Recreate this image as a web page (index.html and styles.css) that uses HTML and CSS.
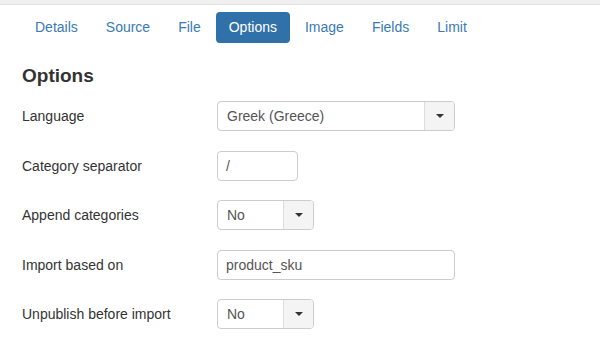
FILE: index.html
```html
<!DOCTYPE html>
<html>
<head>
<meta charset="utf-8">
<link rel="stylesheet" href="styles.css">
</head>
<body>
<div class="topbar"></div>
<nav class="tabs">
  <a class="tab">Details</a>
  <a class="tab">Source</a>
  <a class="tab">File</a>
  <a class="tab active">Options</a>
  <a class="tab">Image</a>
  <a class="tab">Fields</a>
  <a class="tab">Limit</a>
</nav>
<main class="content">
  <h2 class="title">Options</h2>
  <div class="row">
    <label class="label">Language</label>
    <div class="select wide"><span class="value">Greek (Greece)</span><span class="caret-box"><span class="caret"></span></span></div>
  </div>
  <div class="row">
    <label class="label">Category separator</label>
    <div class="input short"><span class="value">/</span></div>
  </div>
  <div class="row">
    <label class="label">Append categories</label>
    <div class="select narrow"><span class="value">No</span><span class="caret-box"><span class="caret"></span></span></div>
  </div>
  <div class="row">
    <label class="label">Import based on</label>
    <div class="input wide"><span class="value">product_sku</span></div>
  </div>
  <div class="row">
    <label class="label">Unpublish before import</label>
    <div class="select narrow"><span class="value">No</span><span class="caret-box"><span class="caret"></span></span></div>
  </div>
</main>
</body>
</html>
```

FILE: styles.css
```css
* { box-sizing: border-box; }
html, body { margin: 0; padding: 0; background: #fff; }
body {
  font-family: "Liberation Sans", Arial, sans-serif;
  font-size: 14px;
  color: #333;
  width: 600px;
  height: 337px;
  overflow: hidden;
}
.topbar {
  height: 5px;
  background: #f0f0f0;
  border-bottom: 1px solid #e2e2e2;
}
.tabs {
  display: flex;
  padding: 7px 0 0 22px;
  gap: 2px;
}
.tab {
  display: block;
  padding: 0 13px;
  height: 31px;
  line-height: 31px;
  color: #3a7ab5;
  border-radius: 4px;
  font-size: 14px;
}
.tab.active {
  background: #3171a9;
  color: #fff;
}
.content {
  padding: 0 0 0 22px;
}
.title {
  margin: 21px 0 0 0;
  font-size: 19px;
  line-height: 23px;
  font-weight: bold;
  color: #333;
}
.row {
  display: flex;
  align-items: center;
  height: 30px;
  margin-top: 19.5px;
}
.row:first-of-type { margin-top: 14px; }
.label {
  width: 195px;
  font-size: 14px;
  color: #333;
}
.select, .input {
  display: flex;
  align-items: stretch;
  height: 30px;
  border: 1px solid #ccc;
  border-radius: 4px;
  background: #fff;
  overflow: hidden;
}
.wide { width: 238px; }
.short { width: 81px; }
.narrow { width: 97px; }
.value {
  flex: 1;
  padding: 0 9px;
  line-height: 28px;
  color: #555;
  font-size: 14px;
}
.input .value { padding-left: 8px; }
.caret-box {
  width: 30px;
  background: #f4f4f4;
  border-left: 1px solid #ddd;
  display: flex;
  align-items: center;
  justify-content: center;
}
.caret {
  width: 0;
  height: 0;
  border-left: 4px solid transparent;
  border-right: 4px solid transparent;
  border-top: 4px solid #333;
}
```
